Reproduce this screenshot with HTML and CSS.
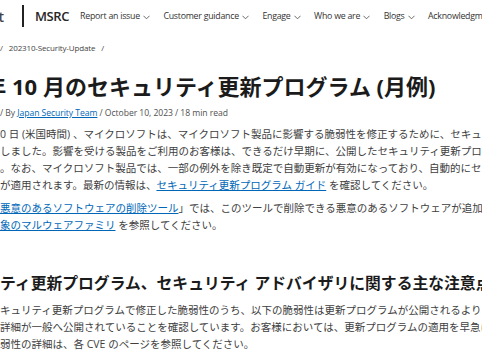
FILE: index.html
```html
<!DOCTYPE html>
<html lang="ja">
<head>
    <meta charset="UTF-8">
    <meta name="viewport" content="width=device-width, initial-scale=1.0">
    <title>2023 年 10 月のセキュリティ更新プログラム (月例) – MSRC</title>
    <link rel="stylesheet" href="styles.css">
</head>
<body>
    <header class="top">
        <div class="brand">
            <div class="ms-clip"><span class="ms">Microsoft</span></div>
            <span class="divider"></span>
            <span class="msrc">MSRC</span>
        </div>
        <nav class="nav">
            <a class="nav-item">Report an issue <svg class="chev" viewBox="0 0 8 5"><path d="M0.5 0.5 L4 4 L7.5 0.5"/></svg></a>
            <a class="nav-item">Customer guidance <svg class="chev" viewBox="0 0 8 5"><path d="M0.5 0.5 L4 4 L7.5 0.5"/></svg></a>
            <a class="nav-item">Engage <svg class="chev" viewBox="0 0 8 5"><path d="M0.5 0.5 L4 4 L7.5 0.5"/></svg></a>
            <a class="nav-item">Who we are <svg class="chev" viewBox="0 0 8 5"><path d="M0.5 0.5 L4 4 L7.5 0.5"/></svg></a>
            <a class="nav-item">Blogs <svg class="chev" viewBox="0 0 8 5"><path d="M0.5 0.5 L4 4 L7.5 0.5"/></svg></a>
            <a class="nav-item">Acknowledgments</a>
        </nav>
    </header>

    <main class="article">
        <div class="crumbs"><span>/</span><span>202310-Security-Update</span><span>/</span></div>

        <h1 class="title"><span class="cut-title">3 年</span> 10 月のセキュリティ更新プログラム (月例)</h1>

        <p class="meta">/ By <a href="#">Japan Security Team</a> / October 10, 2023 / 18 min read</p>

        <div class="para">
            <span class="line">0 日 (米国時間) 、マイクロソフトは、マイクロソフト製品に影響する脆弱性を修正するために、セキュリティ更新</span>
            <span class="line">しました。影響を受ける製品をご利用のお客様は、できるだけ早期に、公開したセキュリティ更新プログラム</span>
            <span class="line">。なお、マイクロソフト製品では、一部の例外を除き既定で自動更新が有効になっており、自動的にセキュリティ</span>
            <span class="line">が適用されます。最新の情報は、<a href="#">セキュリティ更新プログラム ガイド</a> を確認してください。</span>
        </div>

        <div class="para">
            <span class="line"><a href="#">悪意のあるソフトウェアの削除ツール</a>」では、このツールで削除できる悪意のあるソフトウェアが追加されています。</span>
            <span class="line"><a href="#">象のマルウェアファミリ</a> を参照してください。</span>
        </div>

        <h2 class="section">ティ更新プログラム、セキュリティ アドバイザリに関する主な注意点</h2>

        <div class="para">
            <span class="line">キュリティ更新プログラムで修正した脆弱性のうち、以下の脆弱性は更新プログラムが公開されるよりも前に</span>
            <span class="line">詳細が一般へ公開されていることを確認しています。お客様においては、更新プログラムの適用を早急に実施</span>
            <span class="line">弱性の詳細は、各 CVE のページを参照してください。</span>
        </div>
    </main>
</body>
</html>
```

FILE: styles.css
```css
html, body {
    margin: 0;
    padding: 0;
    background-color: #fff;
}
body {
    width: 482px;
    height: 361px;
    overflow: hidden;
    font-family: "Segoe UI", "Open Sans", "Noto Sans CJK JP", sans-serif;
    color: #333;
}
a {
    color: #0067b8;
    text-decoration: underline;
}

/* top bar */
.top {
    display: flex;
    align-items: center;
    height: 32px;
    white-space: nowrap;
}
.brand {
    display: flex;
    align-items: center;
}
.ms-clip {
    width: 5px;
    overflow: hidden;
    display: flex;
    justify-content: flex-end;
}
.ms {
    font-size: 14px;
    font-weight: 600;
    letter-spacing: 1px;
    color: #444;
}
.divider {
    width: 2px;
    height: 22px;
    background-color: #222;
    margin: 0 11px 0 17px;
}
.msrc {
    font-size: 13px;
    font-weight: 600;
    letter-spacing: -0.4px;
    color: #262626;
}
.nav {
    display: flex;
    align-items: center;
    gap: 13.5px;
    margin-left: 11px;
}
.nav-item {
    display: flex;
    align-items: center;
    gap: 3px;
    font-size: 8.8px;
    letter-spacing: -0.25px;
    color: #333;
    text-decoration: none;
}
.chev {
    width: 7px;
    height: 5px;
    margin-top: 3px;
    fill: none;
    stroke: #555;
    stroke-width: 1;
}

/* article */
.article {
    white-space: nowrap;
}
.crumbs {
    display: flex;
    gap: 6px;
    margin-top: 9px;
    font-size: 8px;
    line-height: 14px;
    letter-spacing: -0.15px;
    color: #444;
}
.title {
    margin: 16px 0 0;
    font-size: 22px;
    line-height: 30px;
    font-weight: 700;
    color: #1b1b1b;
}
.cut-title {
    margin-left: -34px;
}
.meta {
    margin: 5px 0 0;
    font-size: 8.6px;
    line-height: 14px;
    letter-spacing: -0.05px;
    color: #505050;
}
.para {
    margin-top: 6px;
    font-size: 10.5px;
    line-height: 17px;
    color: #404040;
}
.line {
    display: block;
}
.section {
    margin: 37px 0 0;
    font-size: 15.8px;
    line-height: 24px;
    font-weight: 700;
    color: #1b1b1b;
}
.section + .para {
    margin-top: 7px;
}
```
